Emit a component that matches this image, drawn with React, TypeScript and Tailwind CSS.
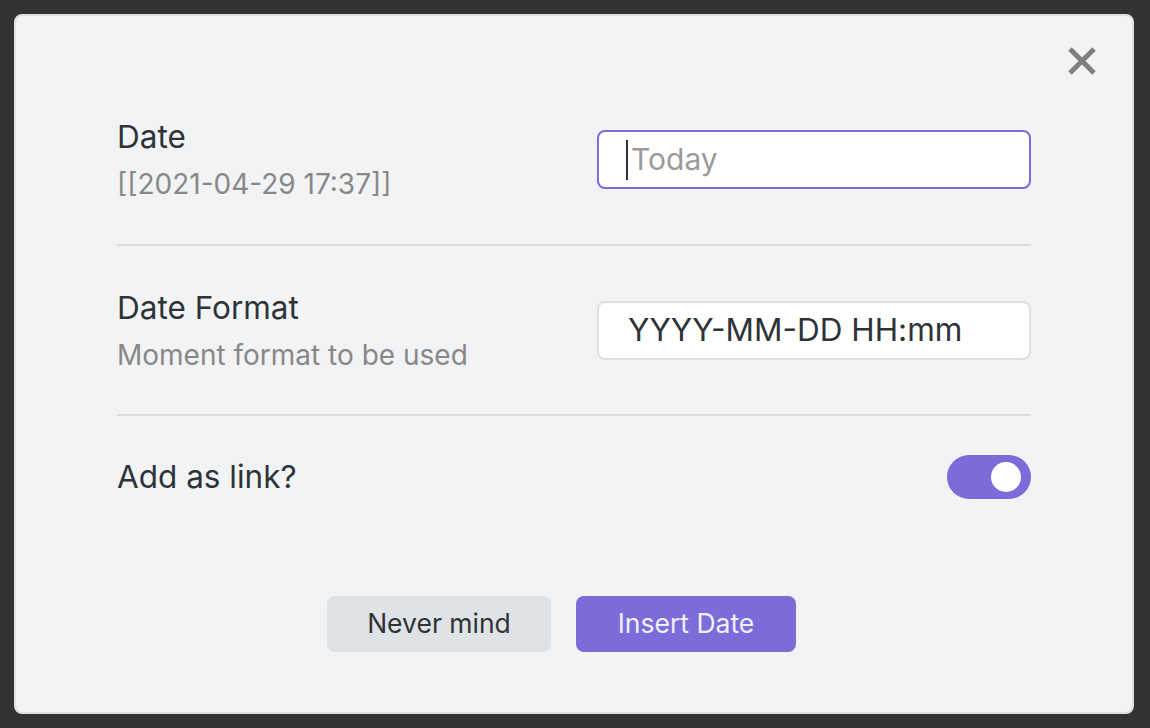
import React, { useState } from 'react';

const font = { fontFamily: 'Inter, "Noto Sans", sans-serif' };

const SettingRow: React.FC<{ name: string; desc?: string; children: React.ReactNode; className: string }> = ({ name, desc, children, className }) => (
    <div className={`flex items-center justify-between ${className}`}>
        <div className="flex flex-col">
            <div className="text-[31.5px] leading-[40px] text-[#2e3338]">{name}</div>
            {desc && <div className="text-[28px] leading-[36px] text-[#888888] mt-[9px]">{desc}</div>}
        </div>
        {children}
    </div>
);

export default function App() {
    const [asLink, setAsLink] = useState(true);

    return (
        <div className="w-[1150px] h-[728px] bg-[#323232] pt-[14px] pl-[14px]" style={font}>
            <div className="relative w-[1120px] h-[700px] bg-[#f2f3f5] border-2 border-[#dfe0e3] rounded-[8px]">
                <button className="absolute top-[31px] right-[36px] w-[28px] h-[28px]">
                    <svg width="28" height="28" viewBox="0 0 28 28">
                        <path d="M2 2 L26 26 M26 2 L2 26" stroke="#7f7f7f" strokeWidth="5" strokeLinecap="butt" />
                    </svg>
                </button>

                <div className="px-[101px] pt-[59px]">
                    <SettingRow name="Date" desc="[[2021-04-29 17:37]]" className="h-[171px] border-b-2 border-[#dcdcdc]">
                        <div className="relative w-[434px] h-[59px] bg-white border-2 border-[#7b6cd9] rounded-[8px] flex items-center">
                            <span className="absolute left-[27px] top-[8px] w-[2px] h-[40px] bg-[#2e3338]" />
                            <input
                                placeholder="Today"
                                className="w-full pl-[32px] bg-transparent outline-none text-[30px] text-[#2e3338] placeholder:text-[#9a9a9a]"
                            />
                        </div>
                    </SettingRow>

                    <SettingRow name="Date Format" desc="Moment format to be used" className="h-[170px] border-b-2 border-[#dcdcdc]">
                        <div className="w-[434px] h-[59px] bg-white border-2 border-[#dfdfdf] rounded-[8px] flex items-center pl-[29px]">
                            <input
                                defaultValue="YYYY-MM-DD HH:mm"
                                className="flex-1 bg-transparent outline-none text-[31.5px] text-[#2e3338]"
                            />
                        </div>
                    </SettingRow>

                    <SettingRow name="Add as link?" className="h-[122px]">
                        <button
                            onClick={() => setAsLink(!asLink)}
                            className={`w-[84px] h-[44px] rounded-full flex items-center px-[10px] ml-[2px] ${asLink ? 'bg-[#7b6cd9] justify-end' : 'bg-[#c8c8c8] justify-start'}`}
                        >
                            <span className="w-[30px] h-[30px] rounded-full bg-white" />
                        </button>
                    </SettingRow>

                    <div className="flex justify-center gap-[25px] pr-[25px] mt-[58px]">
                        <button className="w-[224px] h-[56px] rounded-[8px] bg-[#e0e3e6] text-[26.5px] text-[#2e3338]">
                            Never mind
                        </button>
                        <button className="w-[220px] h-[56px] rounded-[8px] bg-[#7b6cd9] text-[26.5px] text-[#f0f0fa]">
                            Insert Date
                        </button>
                    </div>
                </div>
            </div>
        </div>
    );
}
